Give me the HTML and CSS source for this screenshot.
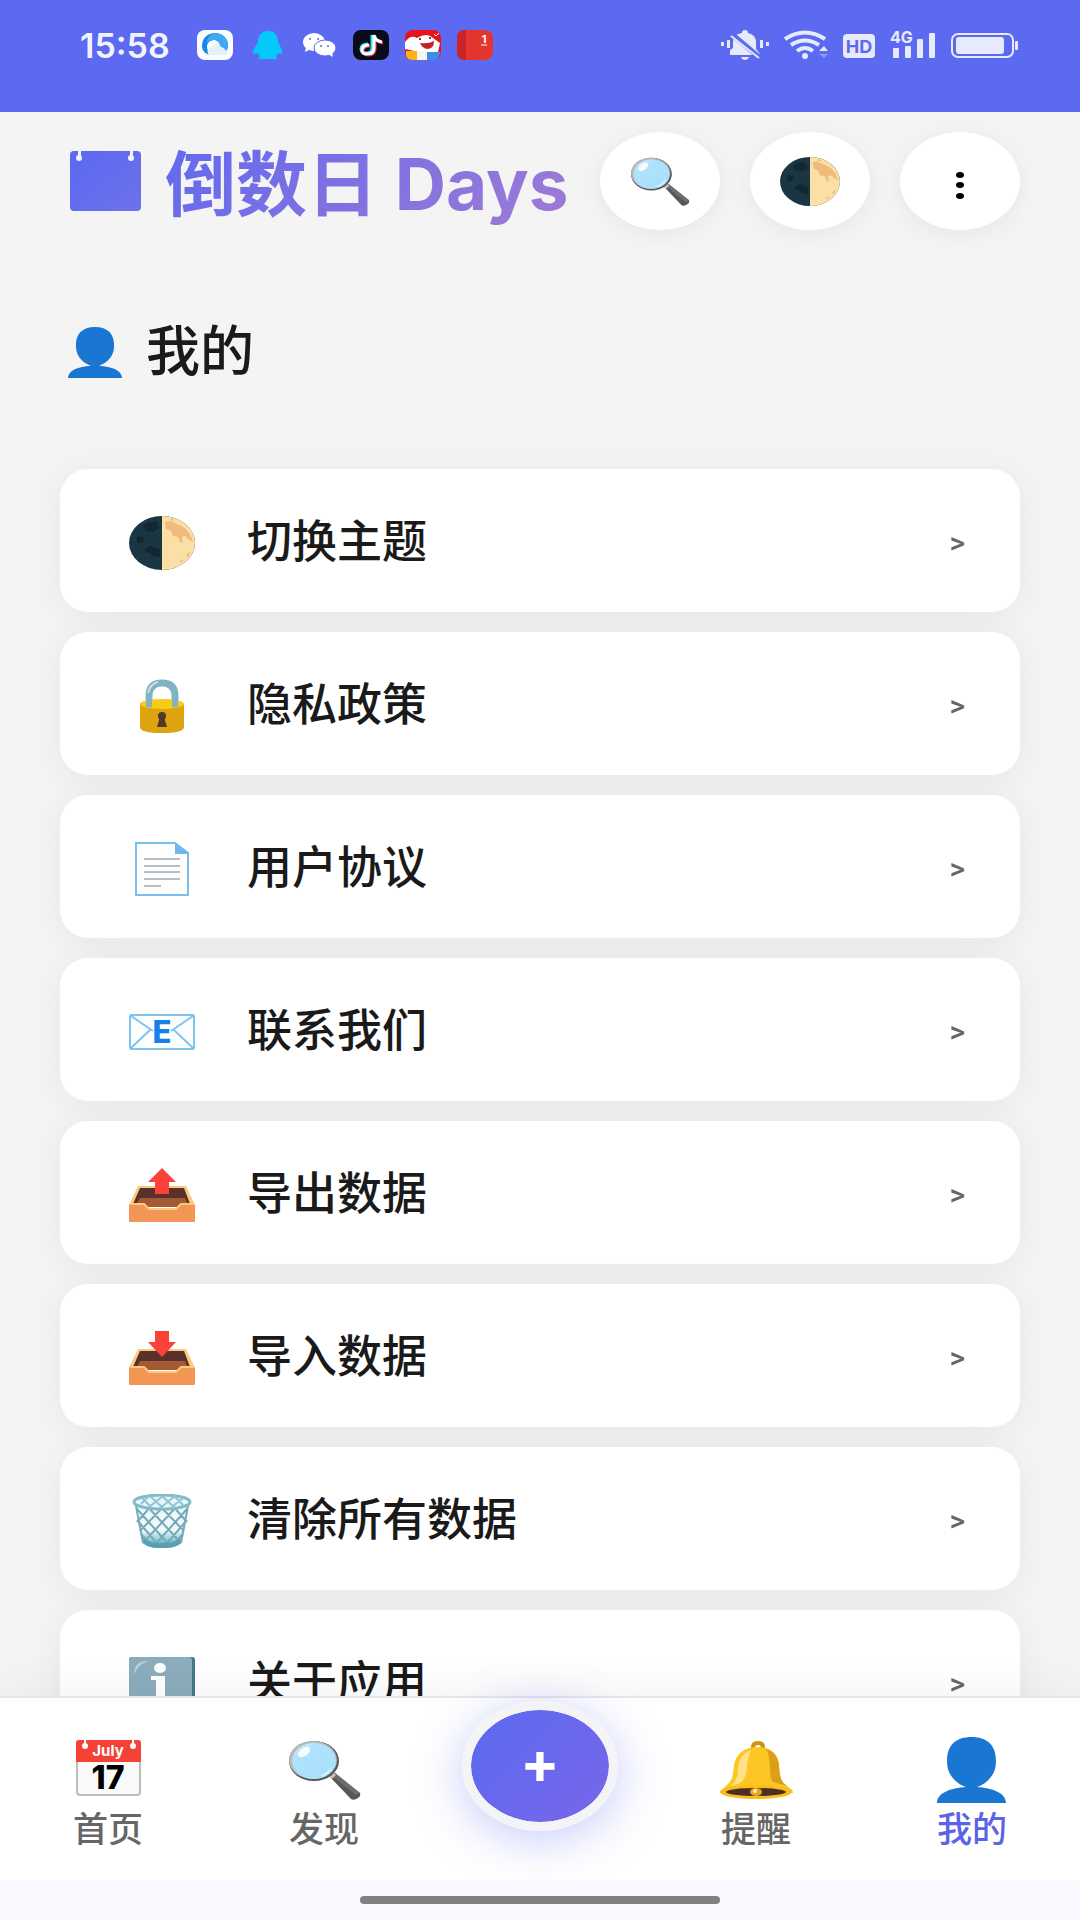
FILE: index.html
```html
<!DOCTYPE html>
<html lang="zh-CN">
<head>
  <meta charset="UTF-8">
  <meta name="viewport" content="width=device-width, initial-scale=1.0">
  <title>倒数日 Days</title>
  <link rel="stylesheet" href="styles.css">
</head>
<body>

  <!-- shared icons -->
  <svg class="sprite" aria-hidden="true">
    <defs>
      <linearGradient id="glass" x1="0" y1="0" x2="0.6" y2="1">
        <stop offset="0" stop-color="#d4f1ff"/>
        <stop offset="0.3" stop-color="#b0e2fd"/>
        <stop offset="1" stop-color="#a9dffb"/>
      </linearGradient>
      <linearGradient id="binFill" x1="0" y1="0" x2="0" y2="1">
        <stop offset="0.6" stop-color="#eef8fa"/>
        <stop offset="0.85" stop-color="#7fc4d4"/>
        <stop offset="1" stop-color="#4c98ab"/>
      </linearGradient>
      <linearGradient id="logoFill" x1="0" y1="0" x2="1" y2="1">
        <stop offset="0" stop-color="#5b68f2"/>
        <stop offset="1" stop-color="#6d72e9"/>
      </linearGradient>
      <clipPath id="moonRight"><rect x="33" y="0" width="33" height="54"/></clipPath>
    </defs>

    <symbol id="moon" viewBox="0 0 66 54">
      <ellipse cx="33" cy="27" rx="33" ry="27" fill="#193642"/>
      <ellipse cx="33" cy="27" rx="33" ry="27" fill="#fbe0a5" clip-path="url(#moonRight)"/>
      <path d="M14 10q5-5 14-4l2 6-6 4-7-1zM16 33l6-4 4 3 5 1v8l-7-1-4-4-4 1zM8 20l7 1-1 5-6 1z" fill="#122731"/>
      <path d="M36 6l5-1 7 3 8 4 5 6 3 8-5-3-3-3-3 1 1 6-3-1-2-5-5-1-2-5-5-2zM41 2l5 2-3 1zM59 37l2-1-1 4-3 1zM51 45l4-2-3 4z" fill="#eebb7d"/>
    </symbol>

    <symbol id="search" viewBox="0 0 73 60">
      <path d="M42 37l5-4 25 20q1 3-2 5-4 3-7 1z" fill="#565656"/>
      <path d="M47 33l25 20-4 2-24-19z" fill="#6d6d6d"/>
      <path d="M40 35l4-3 4 3-4 4z" fill="#c9c3bd"/>
      <ellipse cx="26" cy="21" rx="25" ry="20" fill="#55595b"/>
      <ellipse cx="25" cy="20" rx="24" ry="19" fill="#b6b9ba"/>
      <ellipse cx="26" cy="21" rx="22" ry="18" fill="url(#glass)"/>
      <ellipse cx="16" cy="12" rx="7" ry="4" fill="#f4fcff" transform="rotate(-35 16 12)"/>
      <path d="M30 36q10-2 14-10-2 10-14 10z" fill="#effaff"/>
    </symbol>

    <symbol id="person" viewBox="0 0 68 66" preserveAspectRatio="none">
      <path d="M34 0C50 0 59 9 58 26 58 40 45 49 39 50 55 51 68 56 68 66H0C0 56 13 51 29 50 23 49 10 40 10 26 9 9 18 0 34 0z" fill="#1976d2"/>
    </symbol>

    <symbol id="lock" viewBox="0 0 66 54">
      <path d="M20 29V17q0-13 13-13t13 13v12" fill="none" stroke="#80b4c4" stroke-width="7"/>
      <path d="M19 14q2-9 10-11" fill="none" stroke="#c5e1e8" stroke-width="2"/>
      <path d="M11 25v23q0 6 22 6t22-6V25z" fill="#dda410"/>
      <ellipse cx="33" cy="25" rx="22" ry="5" fill="#f7cb17"/>
      <path d="M17 16h6v12h-6zM43 16h6v12h-6z" fill="#80b4c4"/>
      <circle cx="33" cy="37" r="4" fill="#52382a"/>
      <path d="M31 38h4l3 10h-10z" fill="#52382a"/>
    </symbol>

    <symbol id="doc" viewBox="0 0 66 54">
      <path d="M7 1h39l13 10v42H7z" fill="#fff" stroke="#79bfec" stroke-width="2"/>
      <path d="M46 1l14 10v1H46z" fill="#6fb8ea"/>
      <path d="M15 17h36M15 24h36M15 30h36M15 37h36M15 44h17" stroke="#b9bec4" stroke-width="2"/>
    </symbol>

    <symbol id="tray" viewBox="0 0 66 54">
      <path d="M9 18h48l9 19H0z" fill="#fcc97d"/>
      <path d="M11 20h44l6 16H4z" fill="#5a302a"/>
      <path d="M11 30h45l4 9H6z" fill="#a35a34"/>
      <path d="M1 36h14l5 5h27l5-5h13q1 0 1 1v16q0 1-1 1H1q-1 0-1-1V37q0-1 1-1z" fill="#f29656"/>
      <path d="M1 36h14l5 5h27l5-5h13" fill="none" stroke="#fcc97d" stroke-width="2"/>
    </symbol>

    <symbol id="bin" viewBox="0 0 66 54">
      <path d="M7 10l7 39q4 5 19 5t19-5l7-39z" fill="url(#binFill)"/>
      <path d="M8 15l34 38M8 26l24 28M12 40l12 13M17 11l35 38M30 11l25 26M43 11l15 17M58 15L24 53M58 26L34 54M54 40L42 53M49 11L14 49M36 11L11 37M23 11L8 28" stroke="#74a9b8" stroke-width="2"/>
      <path d="M14 49q4 5 19 5t19-5l1-6q-6 6-20 6t-20-6z" fill="#4f9bae" opacity="0.7"/>
      <path d="M7 12l7 37M59 12l-7 37" stroke="#78a9b8" stroke-width="2"/>
      <ellipse cx="33" cy="8" rx="28" ry="7" fill="#e9f6f9" stroke="#86b9c8" stroke-width="3"/>
      <path d="M12 10l8-8M20 13L34 2M31 14L46 2M43 13l11-9M54 11l-9-9M46 14L33 2M34 14L21 2M22 13l-9-9" stroke="#8fc5d3" stroke-width="2"/>
    </symbol>

    <symbol id="info" viewBox="0 0 66 54">
      <rect width="66" height="54" rx="3" fill="#44788a"/>
      <rect width="63" height="54" rx="3" fill="#8badbc"/>
      <path d="M5 17Q5 4 19 4q-9 3-14 13z" fill="#b6d2dd"/>
      <ellipse cx="31" cy="11" rx="6" ry="5" fill="#fff"/>
      <path d="M22 19h14v29h7v4H20v-4h7V23h-5z" fill="#fff"/>
    </symbol>

    <symbol id="bell" viewBox="0 0 73 58">
      <path d="M31 9V6q0-6 7-6t7 6v3h-4V7q0-3-3-3t-3 3v2z" fill="#c89613"/>
      <path d="M38 6c14 0 20 8 21 18 1 12 1 16 8 21 4 3 6 4 6 7H0c0-3 3-4 6-7 7-6 7-11 8-21C16 13 24 6 38 6z" fill="#fdc625"/>
      <path d="M46 8c9 3 13 9 13 18 1 10 2 15 8 19l-14-4c-5-5-1-24-7-33z" fill="#dba017"/>
      <path d="M31 9C21 13 18 20 18 31q0 7-7 14 10-2 13-7 3-6 3-14 1-8 4-15z" fill="#fee189"/>
      <ellipse cx="36" cy="51" rx="36" ry="7" fill="#fbbd1c"/>
      <ellipse cx="36" cy="51" rx="30" ry="4" fill="#4a3024"/>
      <ellipse cx="36" cy="51" rx="6" ry="4" fill="#e2a91c"/>
      <circle cx="35" cy="50" r="2" fill="#fff0a4"/>
    </symbol>
  </svg>

  <div class="status-bar">
    <span class="time">15:58</span>
    <div class="status-apps">
      <svg width="36" height="30" viewBox="0 0 36 30">
        <rect width="36" height="30" rx="8" fill="#fbfcfe"/>
        <path d="M5 16C5 8 11 3 18 3s13 5 13 12c0 3-1 5-2 6l-6-4c0-5-3-7-6-7-4 0-7 3-7 7 0 3 2 6 5 8C9 25 5 21 5 16z" fill="#1687e8"/>
        <path d="M18 3c7 0 13 5 13 12 0 3-1 5-2 6l-6-4c0-5-3-7-6-7-3 0-5 1-7 3 0-5 3-9 8-10z" fill="#3daaf2"/>
        <path d="M12 25c-3-4-1-7 3-8 2-4 7-5 9 0 4 1 6 4 7 8z" fill="#e6effc"/>
      </svg>
      <svg width="36" height="30" viewBox="0 0 36 30">
        <path d="M19 1c8 0 10 6 10 11l4 8q1 4-1 4l-3-1-2 3 1 3H9l2-3-3-3-3 1q-2-1 0-5l4-7C9 6 12 1 19 1z" fill="#05c8fb"/>
      </svg>
      <svg width="36" height="30" viewBox="0 0 36 30">
        <ellipse cx="13" cy="12" rx="11" ry="9" fill="#fff"/>
        <path d="M5 17l-1 5 6-3z" fill="#fff"/>
        <ellipse cx="24" cy="18" rx="11" ry="8" fill="#fff" stroke="#5b6af0"/>
        <path d="M27 24l5 3-1-5z" fill="#fff"/>
        <circle cx="9" cy="9" r="1" fill="#5b6af0"/>
        <circle cx="17" cy="9" r="1" fill="#5b6af0"/>
        <circle cx="20" cy="16" r="1" fill="#5b6af0"/>
        <circle cx="27" cy="16" r="1" fill="#5b6af0"/>
      </svg>
      <svg width="36" height="30" viewBox="0 0 36 30">
        <rect width="36" height="30" rx="8" fill="#090b18"/>
        <g fill="none" stroke-width="3">
          <path d="M15 14q-7 0-7 5 0 4 5 4 6 0 6-5V5q1 6 8 6" stroke="#25f4ee"/>
          <path d="M17 16q-7 0-7 5 0 3 5 4 7 0 7-6V6q1 6 8 7" stroke="#fe2c55"/>
          <path d="M16 15q-7 0-7 5 0 4 5 4 7 0 7-6V5q1 6 8 7" stroke="#fff"/>
        </g>
      </svg>
      <svg width="36" height="30" viewBox="0 0 36 30">
        <rect width="36" height="30" rx="8" fill="#e9121b"/>
        <path d="M0 12q6-8 12-4 10-6 16 0l7 5-2 9q-9 6-19 0L0 19z" fill="#fff"/>
        <path d="M1 21h11v9H8q-6 0-7-5z" fill="#fcb316"/>
        <path d="M12 21h10v9H12z" fill="#f7f5f2"/>
        <path d="M22 22h13v2q-2 6-7 6h-6z" fill="#3c8fe6"/>
        <path d="M15 13q9 1 14-2 0 8-7 8-5-1-7-6z" fill="#c3202b"/>
        <circle cx="15" cy="9" r="1" fill="#111"/>
        <circle cx="25" cy="8" r="1" fill="#111"/>
        <path d="M29 4l2 2 3-3" stroke="#fff" fill="none"/>
      </svg>
      <svg width="36" height="30" viewBox="0 0 36 30">
        <rect width="36" height="30" rx="8" fill="#e5352f"/>
        <path d="M9 0v30H8q-8 0-8-8V8q0-8 8-8z" fill="#c9242a"/>
        <text class="book-num" x="27" y="13" text-anchor="middle">1</text>
        <path d="M24 15h6" stroke="#fff"/>
      </svg>
    </div>
    <div class="status-system">
      <svg width="48" height="30" viewBox="0 0 48 30" fill="#e7eafd">
        <path d="M0 12h3v4H0zM6 10h3v8H6zM39 10h3v8h-3zM45 12h3v4h-3z"/>
        <path d="M9 25v-5l3-2v-6q0-8 9-9 0-3 3-3t3 3q8 2 8 9v7l4 5v1zM20 27h8q-1 3-4 3t-4-3z"/>
        <path d="M12 5l26 22" stroke="#5b6af0" stroke-width="5"/>
        <path d="M10 6l28 22" stroke="#e7eafd" stroke-width="2"/>
      </svg>
      <svg width="44" height="30" viewBox="0 0 44 30" fill="none" stroke="#e7eafd" stroke-width="4">
        <path d="M1 9q20-13 40 0M7 15q14-9 28 0M13 21q8-6 16 0"/>
        <ellipse cx="21" cy="26" rx="3" ry="3" fill="#e7eafd" stroke="none"/>
        <path d="M35 21l5-5 4 5z" fill="#e7eafd" stroke="none"/>
        <path d="M35 24h9l-4 4z" fill="#8f99f5" stroke="none"/>
      </svg>
      <svg width="32" height="30" viewBox="0 0 32 30">
        <rect y="4" width="32" height="24" rx="4" fill="#e7eafd"/>
        <text class="hd" x="16" y="23" text-anchor="middle">HD</text>
      </svg>
      <svg width="46" height="30" viewBox="0 0 46 30" fill="#e7eafd">
        <text class="net" x="0" y="13">4G</text>
        <rect x="3" y="18" width="6" height="10" rx="1"/>
        <rect x="15" y="16" width="6" height="12" rx="1"/>
        <rect x="27" y="9" width="6" height="19" rx="1"/>
        <rect x="39" y="3" width="6" height="25" rx="1"/>
      </svg>
      <svg width="67" height="30" viewBox="0 0 67 30">
        <rect x="1" y="4" width="61" height="23" rx="6" fill="none" stroke="#e7eafd" stroke-width="2"/>
        <rect x="5" y="7" width="48" height="17" rx="3" fill="#e7eafd"/>
        <rect x="64" y="11" width="3" height="9" rx="1" fill="#e7eafd"/>
      </svg>
    </div>
  </div>

  <header class="header">
    <h1 class="brand">
      <svg width="71" height="60" viewBox="0 0 71 60">
        <rect width="71" height="60" rx="4" fill="url(#logoFill)"/>
        <path d="M8 0h3v5H8zM60 0h3v5h-3z" fill="#f4f4f4"/>
        <circle cx="9" cy="7" r="3" fill="#f4f4f4"/>
        <circle cx="61" cy="7" r="3" fill="#f4f4f4"/>
      </svg>
      <span>倒数日 Days</span>
    </h1>
    <div class="header-actions">
      <button class="icon-btn" aria-label="搜索"><svg width="60" height="49"><use href="#search"/></svg></button>
      <button class="icon-btn" aria-label="切换主题"><svg width="60" height="49"><use href="#moon"/></svg></button>
      <button class="icon-btn" aria-label="更多">
        <svg width="8" height="36" viewBox="0 0 8 36">
          <ellipse cx="4" cy="12" rx="4" ry="3"/><ellipse cx="4" cy="22" rx="4" ry="3"/><ellipse cx="4" cy="33" rx="4" ry="3"/>
        </svg>
      </button>
    </div>
  </header>

  <main class="content">
    <h2 class="page-title">
      <svg width="54" height="51"><use href="#person"/></svg>
      我的
    </h2>
    <div class="settings">
      <button class="setting-item"><svg class="setting-icon"><use href="#moon"/></svg><span class="setting-label">切换主题</span><span class="arrow">&gt;</span></button>
      <button class="setting-item"><svg class="setting-icon"><use href="#lock"/></svg><span class="setting-label">隐私政策</span><span class="arrow">&gt;</span></button>
      <button class="setting-item"><svg class="setting-icon"><use href="#doc"/></svg><span class="setting-label">用户协议</span><span class="arrow">&gt;</span></button>
      <button class="setting-item">
        <svg class="setting-icon">
          <rect x="1" y="10" width="64" height="34" rx="1" fill="#fdfeff" stroke="#7fc3ee" stroke-width="2"/>
          <path d="M2 11l22 15M64 11L42 26M2 43l19-18M64 43L45 25" fill="none" stroke="#7fc3ee" stroke-width="2"/>
          <text class="mail-letter" x="33" y="38" text-anchor="middle">E</text>
        </svg>
        <span class="setting-label">联系我们</span><span class="arrow">&gt;</span>
      </button>
      <button class="setting-item"><svg class="setting-icon"><use href="#tray"/><path d="M33 0l14 14h-7v12H26V14h-7z" fill="#fb4138"/></svg><span class="setting-label">导出数据</span><span class="arrow">&gt;</span></button>
      <button class="setting-item"><svg class="setting-icon"><use href="#tray"/><path d="M26 0h14v11h7L33 26 19 11h7z" fill="#fb4138"/></svg><span class="setting-label">导入数据</span><span class="arrow">&gt;</span></button>
      <button class="setting-item"><svg class="setting-icon"><use href="#bin"/></svg><span class="setting-label">清除所有数据</span><span class="arrow">&gt;</span></button>
      <button class="setting-item"><svg class="setting-icon"><use href="#info"/></svg><span class="setting-label">关于应用</span><span class="arrow">&gt;</span></button>
    </div>
  </main>

  <nav class="tab-bar">
    <a class="tab" href="#home">
      <svg class="tab-icon" viewBox="-4 0 73 60">
        <rect x="1" y="1" width="63" height="54" rx="3" fill="#fafafa" stroke="#bdbdbd" stroke-width="2"/>
        <path d="M0 22V3q0-3 3-3h59q3 0 3 3v19z" fill="#f44336"/>
        <path d="M8 0h2v4H8zM56 0h2v4h-2z" fill="#fff"/>
        <circle cx="9" cy="6" r="3" fill="#fff"/>
        <circle cx="57" cy="6" r="3" fill="#fff"/>
        <text class="cal-month" x="32" y="16" text-anchor="middle">July</text>
        <text class="cal-day" x="32" y="49" text-anchor="middle">17</text>
      </svg>
      首页
    </a>
    <a class="tab" href="#discover"><svg class="tab-icon"><use href="#search"/></svg>发现</a>
    <button class="add-btn" aria-label="添加">+</button>
    <a class="tab" href="#remind"><svg class="tab-icon"><use href="#bell"/></svg>提醒</a>
    <a class="tab active" href="#mine"><svg class="tab-icon person"><use href="#person"/></svg>我的</a>
  </nav>
  <div class="gesture-area"><div class="gesture-bar"></div></div>

</body>
</html>
```
FILE: styles.css
```css
* {
  box-sizing: border-box;
}

body {
  margin: 0;
  height: 100vh;
  display: flex;
  flex-direction: column;
  overflow: hidden;
  background: #f4f4f4;
  color: #1a1a1a;
  font-family: Inter, "Noto Sans CJK SC", sans-serif;
}

button {
  border: none;
  padding: 0;
  color: inherit;
  font-family: inherit;
  cursor: pointer;
}

svg {
  display: block;
  flex-shrink: 0;
}

.sprite {
  position: absolute;
  width: 0;
  height: 0;
}

/* status bar */
.status-bar {
  display: flex;
  align-items: flex-start;
  flex-shrink: 0;
  height: 112px;
  padding: 30px 62px 0 80px;
  background: #5b6af0;
}

.time {
  width: 117px;
  color: #f2f3fe;
  font-size: 34px;
  font-weight: 600;
  line-height: 32px;
}

.status-apps {
  display: flex;
  gap: 16px;
}

.status-system {
  display: flex;
  gap: 15px;
  margin-left: auto;
}

.hd {
  font-size: 18px;
  font-weight: 700;
  fill: #5b6af0;
}

.net {
  font-size: 16px;
  font-weight: 700;
}

.book-num {
  font-size: 11px;
  font-weight: 700;
  fill: #fff;
}

/* header */
.header {
  display: flex;
  align-items: center;
  justify-content: space-between;
  flex-shrink: 0;
  padding: 20px 60px 0 70px;
}

.brand {
  display: flex;
  align-items: center;
  gap: 24px;
  margin: 0;
  font-size: 71px;
  font-weight: 700;
  line-height: 92px;
  white-space: nowrap;
}

.brand span {
  padding-top: 6px;
  background: linear-gradient(135deg, #6069f0, #a07ad4);
  -webkit-background-clip: text;
  background-clip: text;
  color: transparent;
}

.header-actions {
  display: flex;
  gap: 30px;
}

.icon-btn {
  display: flex;
  align-items: center;
  justify-content: center;
  width: 120px;
  height: 98px;
  border-radius: 50%;
  background: #fff;
  box-shadow: 0 4px 24px rgba(0, 0, 0, 0.06);
}

/* settings */
.content {
  flex: 1;
  min-height: 0;
  padding: 90px 60px 0;
  overflow: hidden;
}

.page-title {
  display: flex;
  align-items: center;
  gap: 24px;
  margin: 0 0 85px;
  padding-left: 8px;
  font-size: 54px;
  font-weight: 500;
  line-height: 64px;
}

.settings {
  display: flex;
  flex-direction: column;
  gap: 20px;
}

.setting-item {
  display: flex;
  align-items: center;
  flex-shrink: 0;
  height: 143px;
  padding: 0 55px 0 69px;
  border-radius: 28px;
  background: #fff;
  box-shadow: 0 4px 36px rgba(0, 0, 0, 0.06);
}

.setting-icon {
  width: 66px;
  height: 54px;
  margin-top: 4px;
}

.setting-label {
  margin: 0 0 4px 52px;
  font-size: 45px;
  font-weight: 500;
}

.arrow {
  margin: 4px 0 0 auto;
  color: #666;
  font-family: Roboto, sans-serif;
  font-size: 30px;
  font-weight: 500;
}

.mail-letter {
  font-size: 31px;
  font-weight: 800;
  fill: #1680e8;
}

/* bottom tabs */
.tab-bar {
  position: relative;
  display: grid;
  grid-template-columns: repeat(5, 1fr);
  justify-items: center;
  flex-shrink: 0;
  height: 184px;
  border-top: 2px solid #e6e6e8;
  background: #fff;
  box-shadow: 0 -4px 48px rgba(0, 0, 0, 0.05);
}

.tab {
  display: flex;
  flex-direction: column;
  align-items: center;
  padding-top: 42px;
  color: #666;
  font-size: 35px;
  font-weight: 500;
  line-height: 58px;
  text-decoration: none;
}

.tab-icon {
  width: 73px;
  height: 60px;
}

.tab-icon.person {
  width: 69px;
  height: 66px;
  margin: -3px 0;
}

.tab.active {
  color: #5b63e8;
}

.cal-month {
  font-size: 15px;
  font-weight: 700;
  fill: #fff;
}

.cal-day {
  font-size: 32px;
  font-weight: 800;
  fill: #000;
}

.add-btn {
  width: 156px;
  height: 130px;
  margin-top: 3px;
  padding-bottom: 8px;
  border: 9px solid #f4f4f6;
  border-radius: 50%;
  background: linear-gradient(135deg, #5b6af0, #7866ea) padding-box;
  box-shadow: 0 8px 48px rgba(91, 106, 240, 0.35);
  color: #fff;
  font-size: 58px;
  font-weight: 700;
  line-height: 58px;
}

.gesture-area {
  display: flex;
  justify-content: center;
  align-items: center;
  flex-shrink: 0;
  position: relative;
  height: 40px;
  background: #f8f8ff;
}

.gesture-bar {
  width: 33.33%;
  height: 8px;
  border-radius: 4px;
  background: #808080;
}
```
